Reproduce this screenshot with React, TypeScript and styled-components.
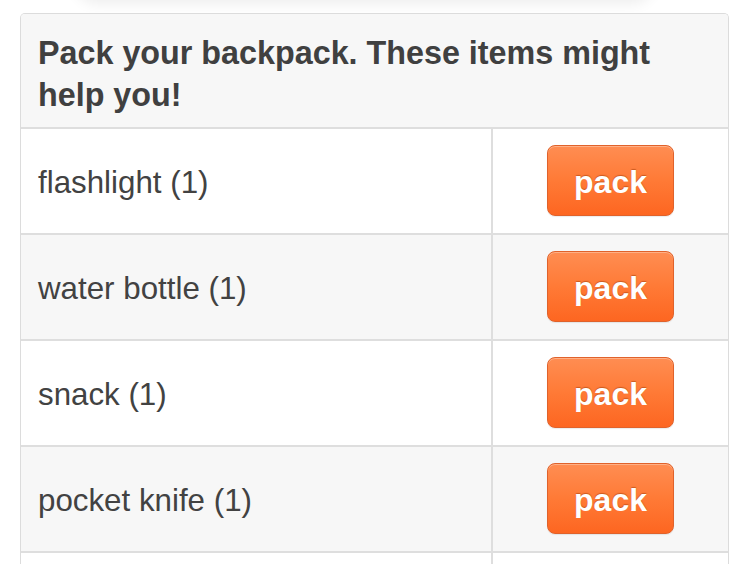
import React from "react";
import styled, { createGlobalStyle } from "styled-components";

const Global = createGlobalStyle`
  html, body { margin: 0; padding: 0; background: #ffffff; }
  body { font-family: "Liberation Sans", Arial, Helvetica, sans-serif; overflow: hidden; }
`;

const Page = styled.div`
  width: 750px;
  height: 564px;
  overflow: hidden;
  padding: 0 21px 0 20px;
  box-sizing: border-box;
`;

const ShadowBlob = styled.div`
  height: 20px;
  margin: -20px 78px 13px 58px;
  border-radius: 0 0 40px 40px;
  box-shadow: 0 0 14px 4px rgba(0, 0, 0, 0.07);
`;

const Card = styled.div`
  border: 1px solid #dcdcdc;
  border-bottom: none;
  border-radius: 5px 5px 0 0;
  overflow: hidden;
`;

const Header = styled.div`
  background: #f7f7f7;
  padding: 18px 20px 11px 17px;
  font-family: "Liberation Sans", Arial, sans-serif;
  font-weight: bold;
  font-size: 32.3px;
  line-height: 42px;
  color: #404040;
  border-bottom: 2px solid #dedede;
`;

const Row = styled.div<{ $alt: boolean }>`
  display: grid;
  grid-template-columns: 472px 1fr;
  height: 104px;
  background: ${(p) => (p.$alt ? "#f7f7f7" : "#ffffff")};
  border-bottom: 2px solid #dedede;
`;

const NameCell = styled.div`
  display: flex;
  align-items: center;
  padding: 4px 0 0 17px;
  font-family: "Liberation Sans", Arial, sans-serif;
  font-size: 31.3px;
  color: #424242;
  border-right: 2px solid #dedede;
`;

const ActionCell = styled.div`
  display: flex;
  align-items: center;
  justify-content: center;
  padding-bottom: 2px;
`;

const PackButton = styled.button`
  width: 127px;
  height: 71px;
  border: 1px solid #e0622b;
  border-radius: 8px;
  background: linear-gradient(to bottom, #ff8d52 0%, #ff7a36 50%, #fd6621 100%);
  color: #ffffff;
  font-family: "Liberation Sans", Arial, sans-serif;
  font-weight: bold;
  font-size: 32px;
  text-shadow: 0 -1px 1px rgba(160, 60, 10, 0.55);
  box-shadow: inset 0 1px 0 rgba(255, 200, 170, 0.6), 0 1px 1px rgba(0, 0, 0, 0.08);
  padding: 4px 0 0 0;
  cursor: pointer;
`;

const items = ["flashlight (1)", "water bottle (1)", "snack (1)", "pocket knife (1)", ""];

export default function App() {
  return (
    <>
      <Global />
      <Page>
        <ShadowBlob />
        <Card>
          <Header>Pack your backpack. These items might help you!</Header>
          {items.map((name, i) => (
            <Row key={i} $alt={i % 2 === 1}>
              <NameCell>{name}</NameCell>
              <ActionCell>{name && <PackButton>pack</PackButton>}</ActionCell>
            </Row>
          ))}
        </Card>
      </Page>
    </>
  );
}
